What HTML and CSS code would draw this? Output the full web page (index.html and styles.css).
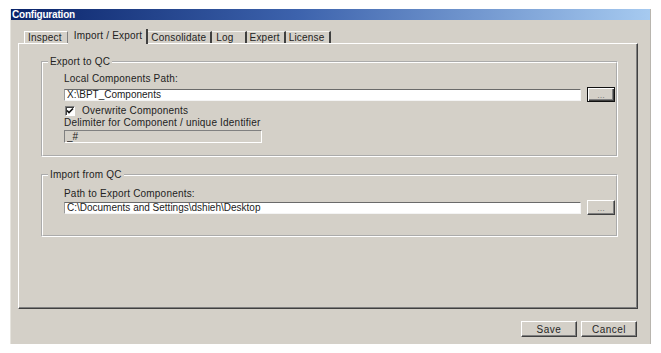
FILE: index.html
```html
<!DOCTYPE html>
<html>
<head>
<meta charset="utf-8">
<title>Configuration</title>
<link rel="stylesheet" href="styles.css">
</head>
<body>
<div class="window">
  <div class="titlebar">Configuration</div>
  <div class="client">
    <div class="tabs">
      <div class="tab first">Inspect</div>
      <div class="tab active">Import / Export</div>
      <div class="tab">Consolidate</div>
      <div class="tab wide">Log</div>
      <div class="tab">Expert</div>
      <div class="tab">License</div>
    </div>
    <div class="panel">
      <fieldset class="group">
        <legend>Export to QC</legend>
        <div class="group-body first-body">
          <div class="label">Local Components Path:</div>
          <div class="path-row">
            <input class="field" type="text" value="X:\BPT_Components" readonly>
            <button class="browse default">...</button>
          </div>
          <div class="check-row">
            <span class="checkbox"><svg width="8" height="8" viewBox="0 0 8 8"><polyline points="1,3.5 3,5.5 7,1.5" fill="none" stroke="#111" stroke-width="1.6"/></svg></span>
            <span>Overwrite Components</span>
          </div>
          <div class="label">Delimiter for Component / unique Identifier</div>
          <input class="field disabled" type="text" value="_#" readonly>
        </div>
      </fieldset>
      <fieldset class="group second">
        <legend>Import from QC</legend>
        <div class="group-body second-body">
          <div class="label">Path to Export Components:</div>
          <div class="path-row">
            <input class="field" type="text" value="C:\Documents and Settings\dshieh\Desktop" readonly>
            <button class="browse">...</button>
          </div>
        </div>
      </fieldset>
    </div>
    <div class="actions">
      <button class="btn">Save</button>
      <button class="btn">Cancel</button>
    </div>
  </div>
</div>
</body>
</html>
```

FILE: styles.css
```css
* { box-sizing: border-box; }
html, body {
  margin: 0;
  padding: 0;
  background: #ffffff;
}
body {
  font-family: "Liberation Sans", Arial, sans-serif;
  font-size: 10px;
  letter-spacing: 0.2px;
  color: #222222;
}
.window {
  margin: 9px 0 0 10px;
  width: 641px;
  height: 335px;
  background: #d4d0c8;
  display: flex;
  flex-direction: column;
  border-left: 1px solid #e6e4de;
  border-right: 1px solid #b8b5ae;
}
.titlebar {
  height: 11px;
  line-height: 12px;
  padding-left: 1px;
  background: linear-gradient(to right, #0a246a 0%, #3d63ad 45%, #a6caf0 100%);
  color: #ffffff;
  font-weight: bold;
  font-size: 10px;
  letter-spacing: -0.2px;
}
.client {
  flex: 1;
  display: flex;
  flex-direction: column;
  padding: 9px 12px 7px 7px;
}
.tabs {
  display: flex;
  align-items: flex-end;
  height: 15px;
  padding-left: 6px;
  margin-bottom: -1px;
  position: relative;
  z-index: 1;
}
.tab {
  height: 12px;
  line-height: 11px;
  margin-bottom: 1px;
  padding: 0 4px 0 3px;
  border-top: 1px solid #f4f3f0;
  border-right: 2px solid #404040;
  white-space: nowrap;
}
.tab.first {
  border-left: 1px solid #ffffff;
  border-right: 1px solid #808080;
  border-top: 1px solid #ffffff;
  padding-right: 5px;
}
.tab.active {
  height: 15px;
  line-height: 13px;
  margin-bottom: 0;
  padding: 0 4px 0 6px;
  background: #d4d0c8;
  border-top: none;
}
.tab.wide { padding-right: 11px; padding-left: 4px; }
.panel {
  height: 266px;
  flex: none;
  border: 1px solid;
  border-color: #ffffff #404040 #404040 #ffffff;
  box-shadow: inset -1px -1px 0 #808080;
  display: flex;
  flex-direction: column;
}
.group {
  margin: 12px 19px 0 22px;
  padding: 0;
  border: 2px groove #ffffff;
  min-width: 0;
}
.group.second { margin-top: 12px; }
.group legend {
  margin-left: 5px;
  padding: 0 2px;
  line-height: 12px;
}
.group-body {
  padding: 5px 1px 12px 21px;
  display: flex;
  flex-direction: column;
}
.second-body { padding-top: 7px; padding-bottom: 20px; }
.label {
  line-height: 12px;
  height: 12px;
  white-space: nowrap;
}
.path-row {
  display: flex;
  align-items: center;
  height: 15px;
}
.first-body .path-row { margin-top: 2px; }
.field {
  font: inherit;
  color: #1a1a1a;
  height: 12px;
  padding: 0 2px;
  margin: 0;
  background: #ffffff;
  border: 1px solid;
  border-color: #6a6a6a #f4f4f4 #f4f4f4 #9a9a9a;
  outline: none;
  line-height: 10px;
}
.path-row .field { flex: 1; min-width: 0; }
.field.disabled {
  margin-top: 1px;
  width: 198px;
  height: 13px;
  background: #d4d0c8;
  border-color: #808080 #ffffff #ffffff #808080;
}
.browse {
  font: inherit;
  font-size: 9px;
  line-height: 8px;
  color: #808080;
  width: 28px;
  height: 15px;
  margin: 0 0 0 6px;
  padding: 0;
  background: #d4d0c8;
  border: 1px solid;
  border-color: #ffffff #404040 #404040 #ffffff;
  box-shadow: inset -1px -1px 0 #808080;
}
.browse.default {
  border: 1px solid #111111;
  box-shadow: inset 1px 1px 0 #ffffff, inset -1px -1px 0 #404040, inset -2px -2px 0 #808080;
}
.check-row {
  display: flex;
  align-items: center;
  height: 12px;
  margin-top: 3px;
  line-height: 12px;
}
.checkbox {
  width: 10px;
  height: 10px;
  margin: 0 7px 0 1px;
  background: #ffffff;
  border: 1px solid;
  border-color: #808080 #ffffff #ffffff #808080;
  box-shadow: inset 1px 1px 0 #404040;
  display: flex;
  align-items: center;
  justify-content: center;
}
.checkbox svg { display: block; }
.actions {
  display: flex;
  justify-content: flex-end;
  gap: 4px;
  margin-top: 12px;
  padding-right: 1px;
}
.btn {
  font: inherit;
  letter-spacing: 0.5px;
  color: #262626;
  width: 56px;
  height: 16px;
  margin: 0;
  padding: 0;
  line-height: 13px;
  background: #d4d0c8;
  border: 1px solid;
  border-color: #ffffff #404040 #404040 #ffffff;
  box-shadow: inset -1px -1px 0 #808080;
}
```
